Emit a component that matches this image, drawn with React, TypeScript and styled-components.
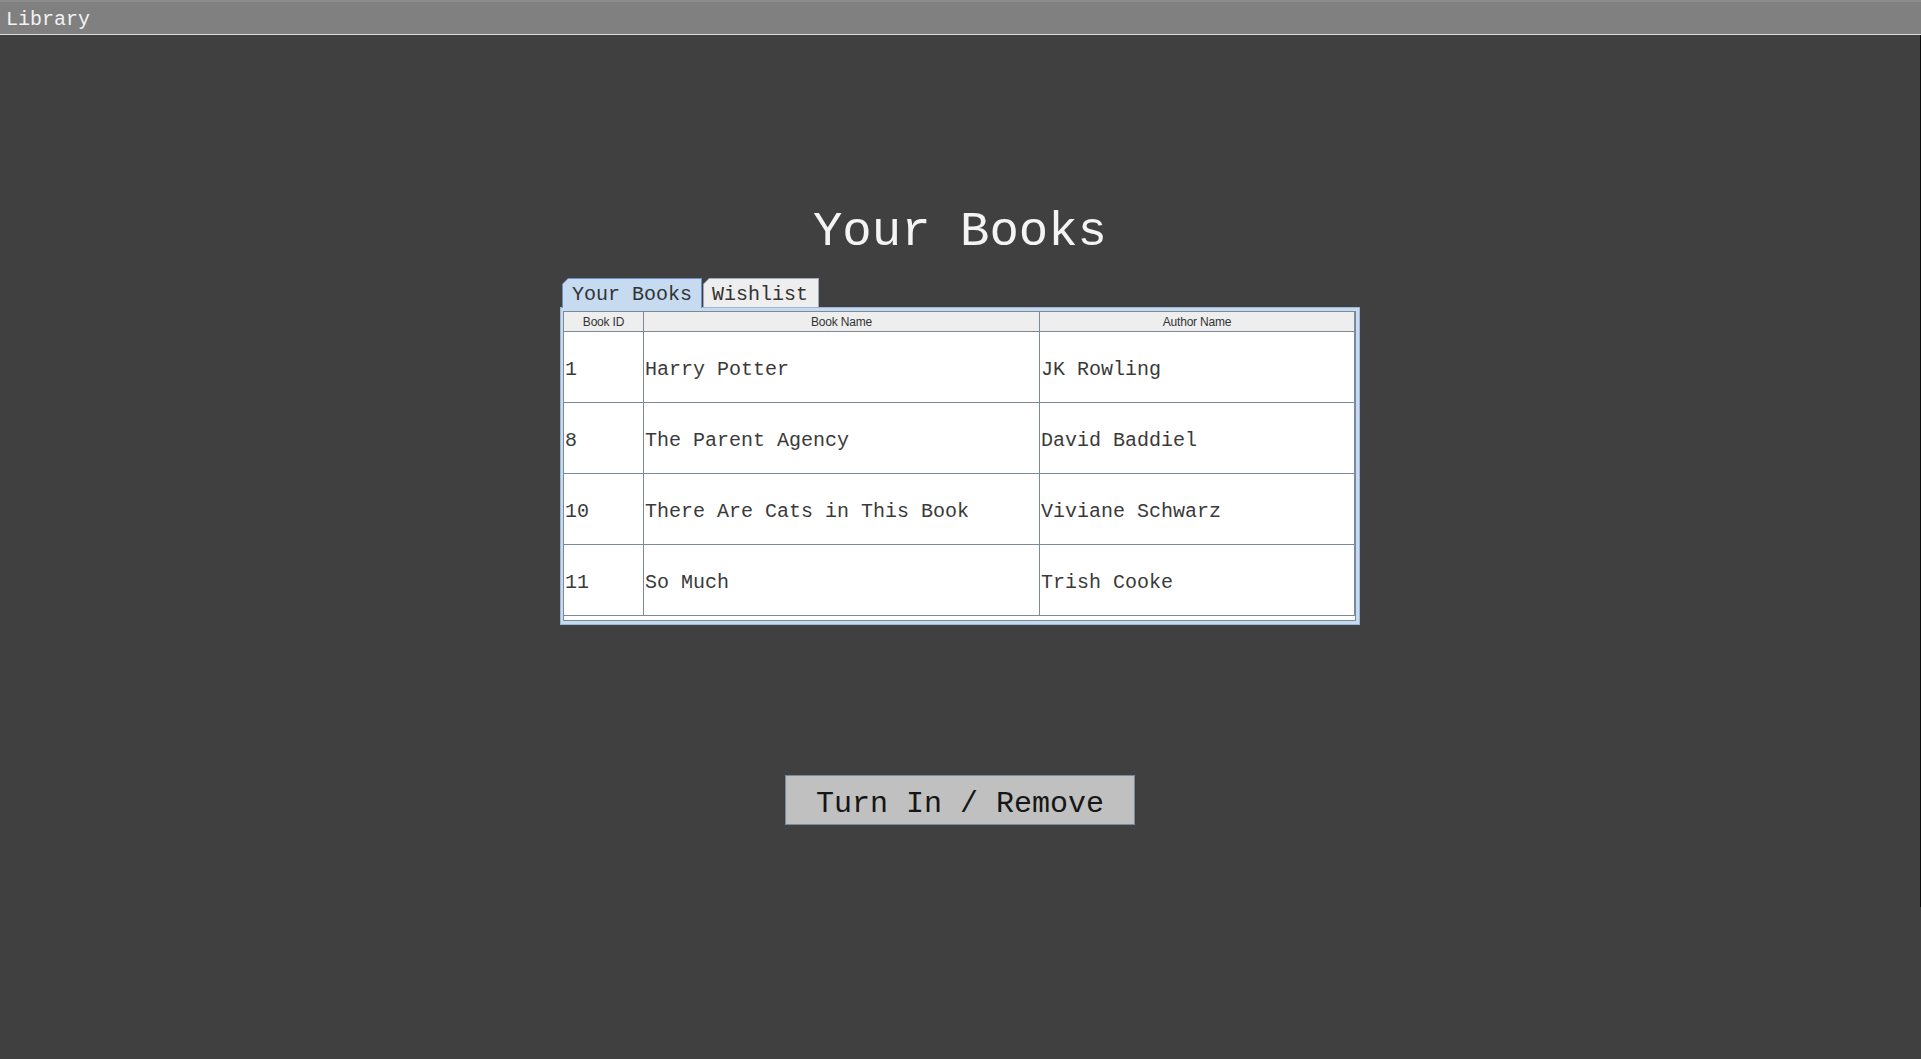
import React from 'react';
import styled, { createGlobalStyle } from 'styled-components';

const mono = '"Liberation Mono", "Courier New", monospace';
const sans = '"Liberation Sans", Arial, sans-serif';

const GlobalStyle = createGlobalStyle`
  html, body {
    margin: 0;
    padding: 0;
    background: #404040;
  }
  body {
    min-height: 100vh;
    font-family: ${mono};
  }
  * {
    box-sizing: border-box;
  }
`;

const Page = styled.div`
  display: flex;
  flex-direction: column;
  min-height: 100vh;
  background: #404040;
`;

const TitleBar = styled.div`
  height: 35px;
  display: flex;
  align-items: center;
  padding: 3px 0 0 6px;
  background: #808080;
  border-top: 2px solid #8c8c8c;
  border-bottom: 1px solid #dedede;
  color: #f2f2f2;
  font-family: ${mono};
  font-size: 20px;
  line-height: 20px;
`;

const Body = styled.div`
  display: flex;
  flex: 1;
`;

const Content = styled.main`
  flex: 1;
  display: flex;
  flex-direction: column;
  align-items: center;
  padding-top: 171px;
`;

// thin dark edge down the right side of the window, as in the capture
const Edge = styled.div`
  width: 1px;
  height: 872px;
  background: #0c0c0c;
`;

const Heading = styled.h1`
  margin: 0;
  padding-top: 2px;
  height: 49px;
  font-family: ${mono};
  font-weight: normal;
  font-size: 49px;
  line-height: 49px;
  color: #f4f4f4;
`;

const TabbedPane = styled.section`
  width: 800px;
  margin-top: 23px;
  display: flex;
  flex-direction: column;
`;

const TabRow = styled.div`
  display: flex;
  align-items: flex-end;
  gap: 1px;
  height: 30px;
  padding-left: 2px;
  position: relative;
  z-index: 1;
  margin-bottom: -1px;
`;

// Metal-style tab: outer layer is the border colour, inner layer the fill,
// both clipped with the same cut top-left corner.
const TabEdge = styled.div<{ $selected?: boolean }>`
  height: ${(p) => (p.$selected ? 30 : 29)}px;
  align-self: ${(p) => (p.$selected ? 'flex-end' : 'flex-start')};
  padding: 1px 1px 0 1px;
  background: ${(p) => (p.$selected ? '#6f8fc6' : '#9eaabb')};
  clip-path: polygon(0 6px, 6px 0, 100% 0, 100% 100%, 0 100%);
`;

const TabFace = styled.div<{ $selected?: boolean; $padL: number; $padR: number }>`
  height: 100%;
  display: flex;
  align-items: center;
  padding: 3px ${(p) => p.$padR}px 0 ${(p) => p.$padL}px;
  background: ${(p) => (p.$selected ? '#c6daf0' : '#eeeeee')};
  clip-path: polygon(0 5px, 5px 0, 100% 0, 100% 100%, 0 100%);
  color: #333333;
  font-family: ${mono};
  font-size: 20px;
  line-height: 20px;
  white-space: nowrap;
`;

const Panel = styled.div`
  border: 1px solid #9db6d8;
  background: #c6daf0;
  padding: 3px 3px 3px 2px;
`;

const ScrollPane = styled.div`
  border: 1px solid #7a8a99;
  background: #ffffff;
  padding-bottom: 4px;
`;

const Row = styled.div<{ $header?: boolean }>`
  display: grid;
  grid-template-columns: 80px 396px 1fr;
  height: ${(p) => (p.$header ? 20 : 71)}px;
  border-bottom: 1px solid #7a8a99;
  background: ${(p) => (p.$header ? '#eeeeee' : '#ffffff')};
`;

const HeaderCell = styled.div`
  display: flex;
  align-items: center;
  justify-content: center;
  padding-top: 1px;
  border-right: 1px solid #7a8a99;
  font-family: ${sans};
  font-size: 12px;
  letter-spacing: -0.2px;
  color: #333333;
`;

const Cell = styled.div`
  display: flex;
  align-items: center;
  padding: 5px 0 0 1px;
  border-right: 1px solid #7a8a99;
  font-family: ${mono};
  font-size: 20px;
  color: #3a3a3a;
  white-space: nowrap;
  overflow: hidden;
`;

const ActionButton = styled.button`
  margin-top: 150px;
  width: 350px;
  height: 50px;
  padding: 7px 0 0 0;
  background: #c0c0c0;
  border: 1px solid #7a8a99;
  color: #161616;
  font-family: ${mono};
  font-size: 30px;
  line-height: 30px;
  cursor: pointer;
`;

const books = [
  { id: 1, name: 'Harry Potter', author: 'JK Rowling' },
  { id: 8, name: 'The Parent Agency', author: 'David Baddiel' },
  { id: 10, name: 'There Are Cats in This Book', author: 'Viviane Schwarz' },
  { id: 11, name: 'So Much', author: 'Trish Cooke' },
];

export default function App() {
  return (
    <Page>
      <GlobalStyle />
      <TitleBar>Library</TitleBar>
      <Body>
        <Content>
          <Heading>Your Books</Heading>
          <TabbedPane>
            <TabRow>
              <TabEdge $selected>
                <TabFace $selected $padL={9} $padR={9}>
                  Your Books
                </TabFace>
              </TabEdge>
              <TabEdge>
                <TabFace $padL={8} $padR={10}>
                  Wishlist
                </TabFace>
              </TabEdge>
            </TabRow>
            <Panel>
              <ScrollPane>
                <Row $header>
                  <HeaderCell>Book ID</HeaderCell>
                  <HeaderCell>Book Name</HeaderCell>
                  <HeaderCell>Author Name</HeaderCell>
                </Row>
                {books.map((b) => (
                  <Row key={b.id}>
                    <Cell>{b.id}</Cell>
                    <Cell>{b.name}</Cell>
                    <Cell>{b.author}</Cell>
                  </Row>
                ))}
              </ScrollPane>
            </Panel>
          </TabbedPane>
          <ActionButton>Turn In / Remove</ActionButton>
        </Content>
        <Edge />
      </Body>
    </Page>
  );
}
